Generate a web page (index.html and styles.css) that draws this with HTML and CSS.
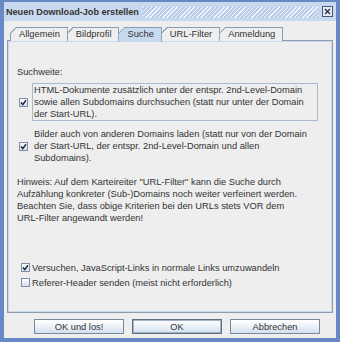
FILE: index.html
```html
<!DOCTYPE html>
<html lang="de">
<head>
<meta charset="utf-8">
<title>Neuen Download-Job erstellen</title>
<link rel="stylesheet" href="styles.css">
</head>
<body>
<div class="win">
  <div class="titlebar">
    <span class="title">Neuen Download-Job erstellen</span>
    <span class="stripes"></span>
    <span class="close"><svg width="11" height="11" viewBox="0 0 11 11"><rect x="0.5" y="0.5" width="10" height="10" fill="#E4ECF6" stroke="#4A5A70"/><path d="M3 3 L8 8 M8 3 L3 8" stroke="#2A3444" stroke-width="1.4"/></svg></span>
  </div>
  <div class="body">
    <div class="tabs">
      <div class="tab">Allgemein</div>
      <div class="tab">Bildprofil</div>
      <div class="tab sel">Suche</div>
      <div class="tab">URL-Filter</div>
      <div class="tab">Anmeldung</div>
    </div>
    <div class="panel">
      <div class="line">Suchweite:</div>
      <div class="opt first">
        <span class="cb"><svg width="7" height="7" viewBox="0 0 7 7"><path d="M1 3.6 L2.8 5.6 L6 1.2" fill="none" stroke="#1E2838" stroke-width="1.5"/></svg></span>
        <div class="optText focus">HTML-Dokumente zusätzlich unter der entspr. 2nd-Level-Domain<br>sowie allen Subdomains durchsuchen (statt nur unter der Domain<br>der Start-URL).</div>
      </div>
      <div class="opt second">
        <span class="cb"><svg width="7" height="7" viewBox="0 0 7 7"><path d="M1 3.6 L2.8 5.6 L6 1.2" fill="none" stroke="#1E2838" stroke-width="1.5"/></svg></span>
        <div class="optText">Bilder auch von anderen Domains laden (statt nur von der Domain<br>der Start-URL, der entspr. 2nd-Level-Domain und allen<br>Subdomains).</div>
      </div>
      <div class="hint">Hinweis: Auf dem Karteireiter "URL-Filter" kann die Suche durch<br>Aufzählung konkreter (Sub-)Domains noch weiter verfeinert werden.<br>Beachten Sie, dass obige Kriterien bei den URLs stets VOR dem<br>URL-Filter angewandt werden!</div>
      <div class="checks">
        <div class="check"><span class="cb"><svg width="7" height="7" viewBox="0 0 7 7"><path d="M1 3.6 L2.8 5.6 L6 1.2" fill="none" stroke="#1E2838" stroke-width="1.5"/></svg></span><span>Versuchen, JavaScript-Links in normale Links umzuwandeln</span></div>
        <div class="check"><span class="cb"></span><span>Referer-Header senden (meist nicht erforderlich)</span></div>
      </div>
    </div>
    <div class="buttons">
      <button class="btn">OK und los!</button>
      <button class="btn def">OK</button>
      <button class="btn">Abbrechen</button>
    </div>
  </div>
</div>
</body>
</html>
```
FILE: styles.css
```css
* { box-sizing: border-box; }
html, body { margin: 0; padding: 0; }
body {
  width: 340px;
  height: 342px;
  overflow: hidden;
  font-family: "Liberation Sans", Arial, sans-serif;
  font-size: 9.3px;
  color: #333333;
}
.win {
  width: 340px;
  height: 342px;
  border: 4px solid #6888C6;
  border-top-width: 2px;
  background: #EEEEEE;
  display: flex;
  flex-direction: column;
}
.titlebar {
  height: 19px;
  background: #C8D9EF;
  display: flex;
  align-items: flex-start;
  padding: 4px 3px 0 2px;
}
.title {
  font-weight: bold;
  font-size: 9.1px;
  line-height: 12px;
  white-space: nowrap;
}
.stripes {
  flex: 1;
  height: 11px;
  margin: 1px 4px 0 4px;
  background: repeating-linear-gradient(135deg, #F4F8FD 0 1px, #B9CDE8 1px 3px);
}
.close {
  width: 11px;
  height: 11px;
  display: block;
  margin-top: 0;
}
.close svg { display: block; }
.body {
  flex: 1;
  display: flex;
  flex-direction: column;
  padding: 6px 3px 4px 3px;
}
.tabs {
  display: flex;
  height: 13px;
  padding-left: 3px;
  position: relative;
  z-index: 1;
}
.tab {
  height: 14px;
  line-height: 13px;
  padding: 0 7px 0 9px;
  white-space: nowrap;
  border-top: 1px solid #8C9CB0;
  border-right: 1px solid #8C9CB0;
  clip-path: polygon(6px 0, 100% 0, 100% 100%, 0 100%, 0 6px);
  background:
    linear-gradient(to bottom right, transparent 40%, #8C9CB0 40%, #8C9CB0 56%, transparent 56%) 0 0 / 7px 7px no-repeat,
    linear-gradient(#8C9CB0, #8C9CB0) 0 6px / 1px 100% no-repeat,
    #EEEEEE;
  background-origin: border-box;
  margin-right: -1px;
}
.tab.sel {
  background:
    linear-gradient(to bottom right, transparent 40%, #8C9CB0 40%, #8C9CB0 56%, transparent 56%) 0 0 / 7px 7px no-repeat,
    linear-gradient(#8C9CB0, #8C9CB0) 0 6px / 1px 100% no-repeat,
    #C6D9EE;
  background-origin: border-box;
  height: 15px;
  z-index: 2;
}
.panel {
  height: 273px;
  border: 1px solid #8C9CB0;
  box-shadow: inset 0 0 0 1px #C6D9EE;
  display: flex;
  flex-direction: column;
  padding: 25px 9px 22px 9px;
  line-height: 12px;
}
.line { height: 12px; white-space: nowrap; }
.opt {
  display: flex;
  align-items: center;
  height: 38px;
}
.opt.first { margin-top: 5px; }
.opt.second { margin-top: 6px; }
.opt .cb { margin-left: 2px; }
.optText {
  margin-left: 4px;
  width: 286px;
  height: 38px;
  padding: 0 1px;
  border: 1px solid transparent;
  white-space: nowrap;
}
.optText.focus { border-color: #AAB9CC; }
.cb {
  width: 9px;
  height: 9px;
  flex: none;
  border: 1px solid #7F90A6;
  background: linear-gradient(#FFFFFF, #D3DFEC);
  display: flex;
  align-items: center;
  justify-content: center;
}
.cb svg { display: block; }
.hint {
  margin-top: 11px;
  height: 48px;
  white-space: nowrap;
}
.checks {
  margin-top: 36px;
  display: flex;
  flex-direction: column;
}
.check {
  height: 15px;
  display: flex;
  align-items: center;
  gap: 2px;
  padding-left: 4px;
  white-space: nowrap;
}
.buttons {
  display: flex;
  justify-content: flex-end;
  gap: 8px;
  margin-top: 6px;
  padding-right: 13px;
}
.btn {
  width: 90px;
  height: 15px;
  padding: 0;
  font-family: "Liberation Sans", Arial, sans-serif;
  font-size: 9.3px;
  color: #333333;
  border: 1px solid #7A8A9E;
  background: linear-gradient(#FFFFFF 0%, #EEF3F9 45%, #D2E0EE 100%);
}
.btn.def {
  border-color: #5E6E82;
  box-shadow: inset 0 0 0 1px #A3B3C6;
}
```
